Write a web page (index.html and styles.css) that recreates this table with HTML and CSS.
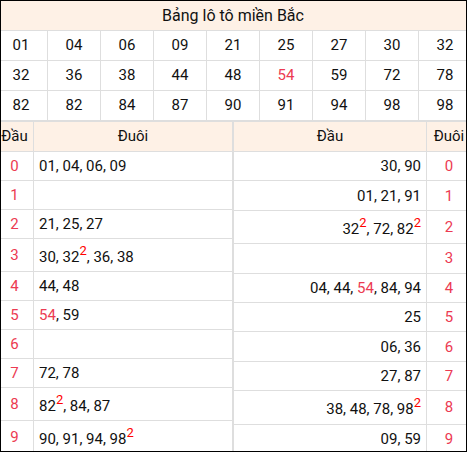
FILE: index.html
```html
<!DOCTYPE html>
<html lang="vi">
<head>
    <meta charset="UTF-8">
    <meta name="viewport" content="width=device-width, initial-scale=1.0">
    <title>Bảng lô tô miền Bắc</title>
    <link rel="stylesheet" href="styles.css">
</head>
<body>
    <div class="frame">
        <div class="sheet">
            <table class="board">
                <tr>
                    <td class="board-title" colspan="9">Bảng lô tô miền Bắc</td>
                </tr>
                <tr>
                    <td>01</td><td>04</td><td>06</td><td>09</td><td>21</td><td>25</td><td>27</td><td>30</td><td>32</td>
                </tr>
                <tr>
                    <td>32</td><td>36</td><td>38</td><td>44</td><td>48</td><td class="hot">54</td><td>59</td><td>72</td><td>78</td>
                </tr>
                <tr>
                    <td>82</td><td>82</td><td>84</td><td>87</td><td>90</td><td>91</td><td>94</td><td>98</td><td>98</td>
                </tr>
            </table>

            <div class="split">
                <table class="loto loto-head">
                    <colgroup><col class="col-key"><col></colgroup>
                    <tr><th>Đầu</th><th>Đuôi</th></tr>
                    <tr><td class="key">0</td><td>01, 04, 06, 09</td></tr>
                    <tr><td class="key">1</td><td></td></tr>
                    <tr><td class="key">2</td><td>21, 25, 27</td></tr>
                    <tr><td class="key">3</td><td>30, 32<sup>2</sup>, 36, 38</td></tr>
                    <tr><td class="key">4</td><td>44, 48</td></tr>
                    <tr><td class="key">5</td><td><span class="hot">54</span>, 59</td></tr>
                    <tr><td class="key">6</td><td></td></tr>
                    <tr><td class="key">7</td><td>72, 78</td></tr>
                    <tr><td class="key">8</td><td>82<sup>2</sup>, 84, 87</td></tr>
                    <tr><td class="key">9</td><td>90, 91, 94, 98<sup>2</sup></td></tr>
                </table>

                <table class="loto loto-tail">
                    <colgroup><col><col class="col-key"></colgroup>
                    <tr><th>Đầu</th><th>Đuôi</th></tr>
                    <tr><td>30, 90</td><td class="key">0</td></tr>
                    <tr><td>01, 21, 91</td><td class="key">1</td></tr>
                    <tr><td>32<sup>2</sup>, 72, 82<sup>2</sup></td><td class="key">2</td></tr>
                    <tr><td></td><td class="key">3</td></tr>
                    <tr><td>04, 44, <span class="hot">54</span>, 84, 94</td><td class="key">4</td></tr>
                    <tr><td>25</td><td class="key">5</td></tr>
                    <tr><td>06, 36</td><td class="key">6</td></tr>
                    <tr><td>27, 87</td><td class="key">7</td></tr>
                    <tr><td>38, 48, 78, 98<sup>2</sup></td><td class="key">8</td></tr>
                    <tr><td>09, 59</td><td class="key">9</td></tr>
                </table>
            </div>
        </div>
    </div>
</body>
</html>
```

FILE: styles.css
```css
body {
    margin: 0;
    background: #fff;
    color: #111;
    font-family: Roboto, "Noto Sans", Arial, sans-serif;
    font-size: 15px;
}

.frame {
    width: 467px;
    height: 452px;
    box-sizing: border-box;
    border: 1px solid #000;
    overflow: hidden;
}

.sheet {
    width: 477px;
    margin-left: -6px;
}

table {
    border-collapse: separate;
    border-spacing: 1px;
    background-color: #dedede;
    table-layout: fixed;
}

td, th {
    background-color: #fff;
    font-weight: normal;
}

/* top board */
.board {
    width: 478px;
    margin: -1px 0 0 -1px;
}

.board td {
    height: 29px;
    padding: 0;
    line-height: 29px;
    text-align: center;
}

.board .board-title {
    background-color: #fef1e6;
    font-size: 16px;
}

.hot {
    color: #ec3a52;
}

/* đầu / đuôi tables */
.split {
    display: flex;
}

.loto-head {
    width: 238px;
}

.loto-tail {
    width: 239px;
}

.loto-head .col-key {
    width: 37px;
}

.loto-tail .col-key {
    width: 44px;
}

.loto th {
    height: 29px;
    padding: 0;
    line-height: 29px;
    text-align: center;
    background-color: #fef1e6;
}

.loto td {
    padding: 4px 5px;
    line-height: 20px;
    text-align: left;
    white-space: nowrap;
}

.loto-tail td {
    text-align: right;
}

.loto td.key {
    padding: 4px 0;
    text-align: center;
    color: #ec3a52;
}

sup {
    font-size: 13px;
    line-height: 15px;
    vertical-align: 7px;
    color: #f00;
}
```
